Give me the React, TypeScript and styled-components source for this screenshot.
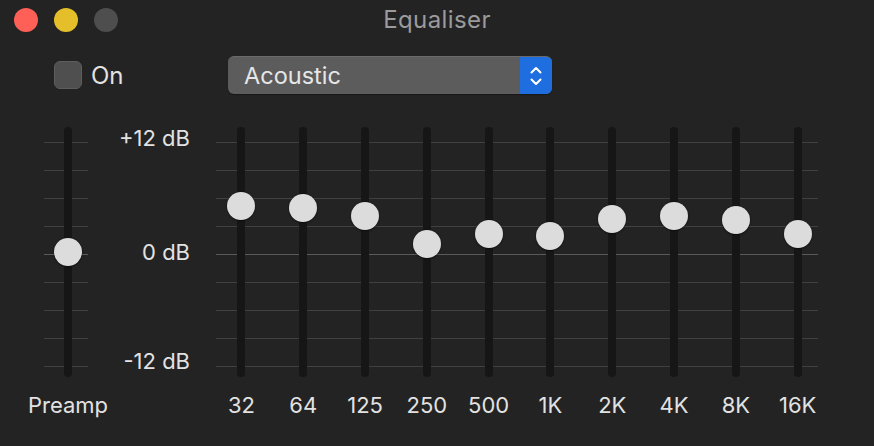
import React from "react";
import styled, { createGlobalStyle } from "styled-components";

const Global = createGlobalStyle`
  html, body { margin: 0; padding: 0; background: #232323; }
  body { font-family: Inter, "Liberation Sans", "Noto Sans", sans-serif; -webkit-font-smoothing: antialiased; }
`;

const Window = styled.div`
  width: 874px;
  height: 446px;
  background: #232323;
  box-sizing: border-box;
  display: flex;
  flex-direction: column;
  overflow: hidden;
`;

const TitleBar = styled.div`
  height: 40px;
  display: grid;
  grid-template-columns: 1fr auto 1fr;
  align-items: center;
`;

const Lights = styled.div`
  display: flex;
  gap: 16px;
  padding-left: 14px;
`;

const Light = styled.span<{ $c: string }>`
  width: 24px;
  height: 24px;
  border-radius: 50%;
  background: ${(p) => p.$c};
  display: block;
`;

const Title = styled.div`
  color: #9b9b9b;
  font-size: 24px;
  line-height: 28px;
  letter-spacing: 0.4px;
`;

const Controls = styled.div`
  margin-top: 16px;
  height: 38px;
  display: flex;
  align-items: center;
  padding-left: 54px;
`;

const CheckGroup = styled.label`
  width: 174px;
  display: flex;
  align-items: center;
  gap: 9px;
  color: #e2e2e2;
  font-size: 24px;
`;

const Box = styled.span`
  width: 28px;
  height: 28px;
  box-sizing: border-box;
  border-radius: 6px;
  background: #4f4f4f;
  border: 1px solid #5d5d5d;
  display: block;
`;

const Popup = styled.div`
  width: 324px;
  height: 38px;
  box-sizing: border-box;
  border-radius: 6px;
  background: #5c5c5c;
  border-top: 1px solid #6a6a6a;
  display: flex;
  overflow: hidden;
  box-shadow: 0 1px 1px rgba(0, 0, 0, 0.35);
`;

const PopupText = styled.div`
  flex: 1;
  display: flex;
  align-items: center;
  padding-left: 16px;
  color: #e6e6e6;
  font-size: 23.5px;
`;

const PopupArrows = styled.div`
  width: 32px;
  background: #1e6ee0;
  display: flex;
  align-items: center;
  justify-content: center;
`;

const Main = styled.div`
  margin-top: 33px;
  display: flex;
  padding-left: 28px;
`;

const Column = styled.div<{ $w: number }>`
  width: ${(p) => p.$w}px;
  display: flex;
  flex-direction: column;
  align-items: center;
`;

const TrackArea = styled.div<{ $ticks?: boolean }>`
  position: relative;
  width: 100%;
  height: 250px;
  display: flex;
  justify-content: center;
  ${(p) =>
    p.$ticks
      ? `
  &::before {
    content: "";
    position: absolute;
    left: 16px;
    right: 20px;
    top: 15px;
    height: 225px;
    background:
      linear-gradient(#5a5a5a, #5a5a5a) 0 112px / 100% 1px no-repeat,
      repeating-linear-gradient(to bottom, #404040 0 1px, transparent 1px 28px);
  }`
      : ""}
`;

const Track = styled.div`
  position: relative;
  width: 8px;
  height: 250px;
  border-radius: 4px;
  background: #161616;
  z-index: 1;
`;

const Knob = styled.div`
  position: absolute;
  left: 50%;
  width: 28px;
  height: 28px;
  margin-left: -14px;
  margin-top: -14px;
  border-radius: 50%;
  background: #dcdcdc;
  box-shadow: 0 0 1px rgba(0, 0, 0, 0.6), 0 1px 2px rgba(0, 0, 0, 0.4);
`;

const Label = styled.div`
  margin-top: 15px;
  height: 26px;
  line-height: 26px;
  color: #e2e2e2;
  font-size: 22px;
  white-space: nowrap;
`;

const Scale = styled.div`
  width: 82px;
  height: 250px;
  display: flex;
  flex-direction: column;
  align-items: flex-end;
`;

const ScaleLabel = styled.div<{ $mt?: number }>`
  margin-top: ${(p) => p.$mt ?? 0}px;
  line-height: 22px;
  color: #e2e2e2;
  font-size: 22px;
  white-space: nowrap;
`;

const Bands = styled.div`
  position: relative;
  margin-left: 20.6px;
  display: grid;
  grid-template-columns: repeat(10, 61.8px);
  &::before {
    content: "";
    position: absolute;
    left: 5.4px;
    width: 602px;
    top: 15px;
    height: 225px;
    background:
      linear-gradient(#5a5a5a, #5a5a5a) 0 112px / 100% 1px no-repeat,
      repeating-linear-gradient(to bottom, #404040 0 1px, transparent 1px 28px);
  }
`;

const bands: [string, number][] = [
  ["32", 79],
  ["64", 80.5],
  ["125", 88.5],
  ["250", 116.5],
  ["500", 106.5],
  ["1K", 109],
  ["2K", 91.5],
  ["4K", 88.5],
  ["8K", 92.5],
  ["16K", 106.5],
];

const Slider: React.FC<{ label: string; pos: number; width: number; ticks?: boolean }> = ({
  label,
  pos,
  width,
  ticks,
}) => (
  <Column $w={width}>
    <TrackArea $ticks={ticks}>
      <Track>
        <Knob style={{ top: pos }} />
      </Track>
    </TrackArea>
    <Label>{label}</Label>
  </Column>
);

export default function App() {
  return (
    <Window>
      <Global />
      <TitleBar>
        <Lights>
          <Light $c="#fe5f57" />
          <Light $c="#e5bf29" />
          <Light $c="#4e4e4e" />
        </Lights>
        <Title>Equaliser</Title>
        <div />
      </TitleBar>
      <Controls>
        <CheckGroup>
          <Box />
          On
        </CheckGroup>
        <Popup>
          <PopupText>Acoustic</PopupText>
          <PopupArrows>
            <svg width="14" height="22" viewBox="0 0 14 22" fill="none" stroke="#fff" strokeWidth="2" strokeLinecap="round" strokeLinejoin="round">
              <path d="M2.5 7.5 L7 3 L11.5 7.5" />
              <path d="M2.5 14.5 L7 19 L11.5 14.5" />
            </svg>
          </PopupArrows>
        </Popup>
      </Controls>
      <Main>
        <Slider label="Preamp" pos={125} width={80} ticks />
        <Scale>
          <ScaleLabel>+12 dB</ScaleLabel>
          <ScaleLabel $mt={92}>0 dB</ScaleLabel>
          <ScaleLabel $mt={87}>-12 dB</ScaleLabel>
        </Scale>
        <Bands>
          {bands.map(([l, p]) => (
            <Slider key={l} label={l} pos={p} width={61.8} />
          ))}
        </Bands>
      </Main>
    </Window>
  );
}
